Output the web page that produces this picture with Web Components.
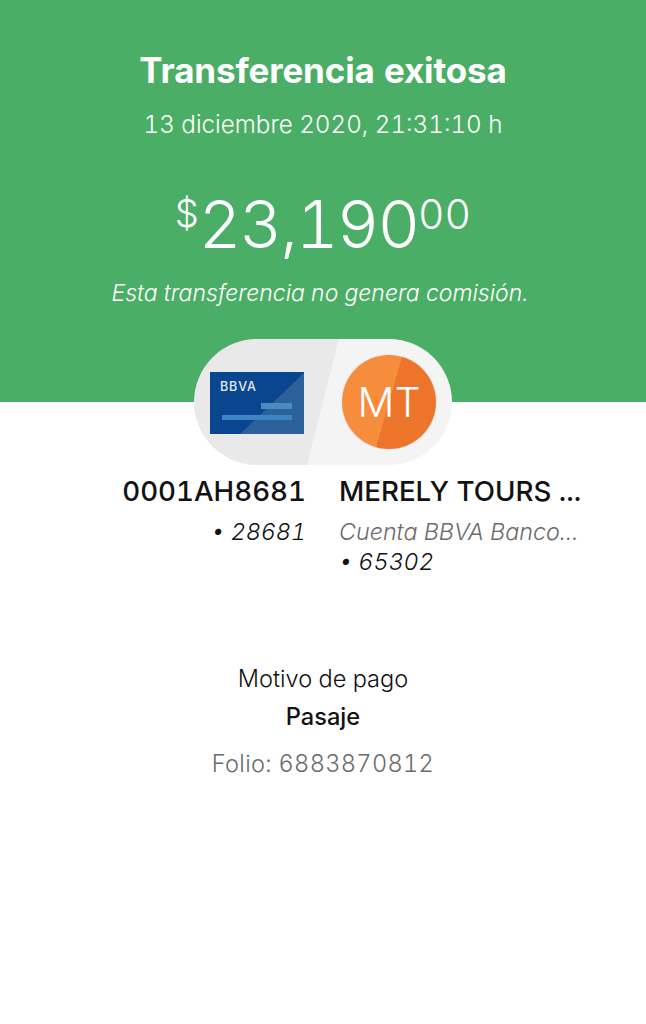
<!DOCTYPE html>
<html lang="es">
<head>
<meta charset="utf-8">
<title>Transferencia exitosa</title>
<style>
  html, body { margin: 0; background: #fff; }
  body { font-family: "Inter", "Liberation Sans", sans-serif; font-variant-numeric: tabular-nums; width: 646px; height: 1024px; overflow: hidden; }
  .accounts { display: grid; grid-template-columns: 306px 1fr; column-gap: 33px; margin-top: 8px; }
</style>
</head>
<body>
<transfer-hero title-text="Transferencia exitosa" date="13 diciembre 2020, 21:31:10 h" note="Esta transferencia no genera comisión.">
  <amount-display whole="23,190" cents="00"></amount-display>
</transfer-hero>
<transfer-pill initials="MT"></transfer-pill>
<div class="accounts">
  <account-info align="right" name="0001AH8681" number="28681"></account-info>
  <account-info name="MERELY TOURS ..." bank="Cuenta BBVA Banco..." number="65302"></account-info>
</div>
<payment-detail reason="Pasaje" folio="6883870812"></payment-detail>

<script>
class TransferHero extends HTMLElement {
  connectedCallback() {
    if (this.shadowRoot) return;
    this.attachShadow({ mode: 'open' });
    this.shadowRoot.innerHTML = `
      <style>
        :host { display: block; height: 402px; box-sizing: border-box; background: #4bae66; color: #fff; text-align: center; padding-top: 48px; }
        h1 { margin: 0; font-size: 35px; line-height: 44px; font-weight: 700; letter-spacing: -.15px; }
        .date { margin-top: 17px; font-size: 24.2px; line-height: 32px; font-weight: 300; }
        .note { margin: 11px 6px 0 0; font-size: 23px; line-height: 32px; font-weight: 300; font-style: italic; }
      </style>
      <h1>${this.getAttribute('title-text')}</h1>
      <div class="date">${this.getAttribute('date')}</div>
      <slot></slot>
      <div class="note">${this.getAttribute('note')}</div>`;
  }
}
customElements.define('transfer-hero', TransferHero);

class AmountDisplay extends HTMLElement {
  connectedCallback() {
    if (this.shadowRoot) return;
    this.attachShadow({ mode: 'open' });
    this.shadowRoot.innerHTML = `
      <style>
        :host { display: flex; justify-content: center; align-items: flex-start; height: 78px; margin-top: 47px; font-weight: 300; line-height: 1; }
        .sign { font-size: 38px; margin-top: 6px; }
        .whole { font-size: 66px; margin-top: 3px; letter-spacing: -2px; }
        .cents { font-size: 41px; margin-top: 6px; }
      </style>
      <span class="sign">$</span><span class="whole">${this.getAttribute('whole')}</span><span class="cents">${this.getAttribute('cents')}</span>`;
  }
}
customElements.define('amount-display', AmountDisplay);

class TransferPill extends HTMLElement {
  connectedCallback() {
    if (this.shadowRoot) return;
    this.attachShadow({ mode: 'open' });
    this.shadowRoot.innerHTML = `
      <style>
        :host { display: flex; align-items: center; box-sizing: border-box; width: 258px; height: 126px; margin: -63px 0 0 194px; padding: 0 16px; border-radius: 63px; background: linear-gradient(104.25deg, #e9e9ea 50%, #f4f4f5 50%); position: relative; }
        svg { display: block; }
        .card { width: 94px; height: 62px; margin-top: 1px; }
        .avatar { width: 94px; height: 94px; margin-left: 38px; border-radius: 50%; background: linear-gradient(106deg, #f68d3d 50%, #ec752b 50%); box-shadow: 0 0 2px rgba(0,0,0,.15); color: #fff; font-size: 41px; font-weight: 300; display: flex; align-items: center; justify-content: center; }
      </style>
      <svg class="card" viewBox="0 0 94 62">
        <rect width="94" height="62" fill="#0a4690"/>
        <polygon points="94,1 94,62 30,62" fill="#2c6199"/>
        <rect x="51" y="31" width="31" height="6" fill="#4a8bc0"/>
        <rect x="12" y="43" width="70" height="5" fill="#3d84c2"/>
        <text x="10" y="18.5" font-family="Inter, sans-serif" font-size="12.5" font-weight="500" letter-spacing=".9" fill="#e6edf5">BBVA</text>
      </svg>
      <div class="avatar">${this.getAttribute('initials')}</div>`;
  }
}
customElements.define('transfer-pill', TransferPill);

class AccountInfo extends HTMLElement {
  connectedCallback() {
    if (this.shadowRoot) return;
    this.attachShadow({ mode: 'open' });
    const bank = this.getAttribute('bank');
    this.shadowRoot.innerHTML = `
      <style>
        :host { display: block; color: #121212; text-align: ${this.getAttribute('align') || 'left'}; }
        .name { font-size: 27.7px; line-height: 36px; font-weight: 500; white-space: nowrap; }
        .sub { font-size: 23.3px; line-height: 29.5px; font-style: italic; font-weight: 300; white-space: nowrap; }
        .rows { margin-top: 8px; }
        .bank { color: #6b6b6b; }
      </style>
      <div class="name">${this.getAttribute('name')}</div>
      <div class="rows">
        ${bank ? `<div class="sub bank">${bank}</div>` : ''}
        <div class="sub">• ${this.getAttribute('number')}</div>
      </div>`;
  }
}
customElements.define('account-info', AccountInfo);

class PaymentDetail extends HTMLElement {
  connectedCallback() {
    if (this.shadowRoot) return;
    this.attachShadow({ mode: 'open' });
    this.shadowRoot.innerHTML = `
      <style>
        :host { display: block; margin-top: 85px; text-align: center; color: #121212; font-size: 23.6px; }
        div { line-height: 36px; }
        .label { font-weight: 300; }
        .reason { font-weight: 500; margin-top: 2px; }
        .folio { color: #6b6b6b; font-weight: 300; margin-top: 11px; letter-spacing: .3px; }
      </style>
      <div class="label">Motivo de pago</div>
      <div class="reason">${this.getAttribute('reason')}</div>
      <div class="folio">Folio: ${this.getAttribute('folio')}</div>`;
  }
}
customElements.define('payment-detail', PaymentDetail);
</script>
</body>
</html>
